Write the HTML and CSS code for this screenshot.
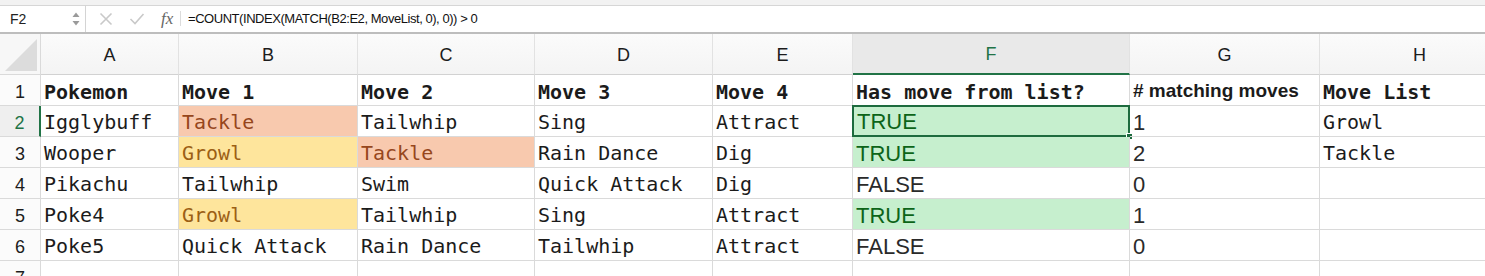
FILE: index.html
```html
<!DOCTYPE html>
<html lang="en">

<head>
    <meta charset="UTF-8">
    <title>Pokemon moves</title>
    <link rel="stylesheet" href="styles.css">
</head>

<body>
    <div class="window">
        <!-- formula bar -->
        <div class="formula-bar">
            <div class="name-box">
                <span class="cell-ref">F2</span>
                <span class="stepper">
                    <svg width="8" height="16" viewBox="0 0 8 16">
                        <path d="M0.5 6 L4 1.5 L7.5 6 Z" fill="#9a9a9a" />
                        <path d="M0.5 10 L4 14.5 L7.5 10 Z" fill="#9a9a9a" />
                    </svg>
                </span>
            </div>
            <div class="bar-tools">
                <svg class="tool" width="14" height="14" viewBox="0 0 14 14">
                    <path d="M1.5 1.5 L12.5 12.5 M12.5 1.5 L1.5 12.5" stroke="#c9c9c9" stroke-width="1.6" />
                </svg>
                <svg class="tool" width="16" height="14" viewBox="0 0 16 14">
                    <path d="M1.5 7 L6 11.5 L14.5 2" stroke="#c9c9c9" stroke-width="1.6" fill="none" />
                </svg>
                <span class="fx">fx</span>
            </div>
            <div class="formula">=COUNT(INDEX(MATCH(B2:E2, MoveList, 0), 0)) &gt; 0</div>
        </div>

        <!-- sheet -->
        <div class="sheet">
            <div class="corner"><span class="corner-tri"></span></div>
            <div class="col-head">A</div>
            <div class="col-head">B</div>
            <div class="col-head">C</div>
            <div class="col-head">D</div>
            <div class="col-head">E</div>
            <div class="col-head active">F</div>
            <div class="col-head">G</div>
            <div class="col-head">H</div>

            <div class="row-head">1</div>
            <div class="cell bold">Pokemon</div>
            <div class="cell bold">Move 1</div>
            <div class="cell bold">Move 2</div>
            <div class="cell bold">Move 3</div>
            <div class="cell bold">Move 4</div>
            <div class="cell bold">Has move from list?</div>
            <div class="cell sans-bold"># matching moves</div>
            <div class="cell bold">Move List</div>

            <div class="row-head active">2</div>
            <div class="cell">Igglybuff</div>
            <div class="cell bad">Tackle</div>
            <div class="cell">Tailwhip</div>
            <div class="cell">Sing</div>
            <div class="cell">Attract</div>
            <div class="cell num good selected">TRUE
                <span class="handle"></span>
            </div>
            <div class="cell num">1</div>
            <div class="cell">Growl</div>

            <div class="row-head">3</div>
            <div class="cell">Wooper</div>
            <div class="cell neutral">Growl</div>
            <div class="cell bad">Tackle</div>
            <div class="cell">Rain Dance</div>
            <div class="cell">Dig</div>
            <div class="cell num good">TRUE</div>
            <div class="cell num">2</div>
            <div class="cell">Tackle</div>

            <div class="row-head">4</div>
            <div class="cell">Pikachu</div>
            <div class="cell">Tailwhip</div>
            <div class="cell">Swim</div>
            <div class="cell">Quick Attack</div>
            <div class="cell">Dig</div>
            <div class="cell num">FALSE</div>
            <div class="cell num">0</div>
            <div class="cell"></div>

            <div class="row-head">5</div>
            <div class="cell">Poke4</div>
            <div class="cell neutral">Growl</div>
            <div class="cell">Tailwhip</div>
            <div class="cell">Sing</div>
            <div class="cell">Attract</div>
            <div class="cell num good">TRUE</div>
            <div class="cell num">1</div>
            <div class="cell"></div>

            <div class="row-head">6</div>
            <div class="cell">Poke5</div>
            <div class="cell">Quick Attack</div>
            <div class="cell">Rain Dance</div>
            <div class="cell">Tailwhip</div>
            <div class="cell">Attract</div>
            <div class="cell num">FALSE</div>
            <div class="cell num">0</div>
            <div class="cell"></div>

            <div class="row-head">7</div>
            <div class="cell"></div>
            <div class="cell"></div>
            <div class="cell"></div>
            <div class="cell"></div>
            <div class="cell"></div>
            <div class="cell"></div>
            <div class="cell"></div>
            <div class="cell"></div>
        </div>
    </div>
</body>

</html>
```

FILE: styles.css
```css
:root {
    --grid: #dadada;
    --head-bg: #f7f7f7;
    --excel-green: #217346;
    --text: #1b1b1b;
}

* {
    margin: 0;
    padding: 0;
    box-sizing: border-box;
}

body {
    background: #ffffff;
    overflow: hidden;
    font-family: 'Liberation Sans', Arial, sans-serif;
    color: var(--text);
}

.window {
    width: 1485px;
    height: 276px;
    overflow: hidden;
}

/* formula bar */
.formula-bar {
    height: 34px;
    display: flex;
    align-items: stretch;
    border-top: 5px solid #f2f2f2;
    border-bottom: 2px solid #bdbdbd;
    box-shadow: inset 0 1px 0 #d6d6d6;
    background: #ffffff;
}

.name-box {
    width: 86px;
    display: flex;
    align-items: center;
    justify-content: space-between;
    padding: 0 5px 0 10px;
    border-right: 1px solid #d4d4d4;
}

.cell-ref {
    font-size: 14px;
    color: #222;
}

.stepper {
    display: flex;
    align-items: center;
}

.bar-tools {
    width: 96px;
    display: flex;
    align-items: center;
    gap: 16px;
    padding-left: 13px;
    position: relative;
}

.bar-tools::after {
    content: "";
    position: absolute;
    right: 1px;
    top: 6px;
    bottom: 6px;
    width: 1px;
    background: #dcdcdc;
}

.fx {
    font-family: 'Liberation Serif', 'Times New Roman', serif;
    font-style: italic;
    font-size: 17px;
    color: #666;
}

.formula {
    display: flex;
    align-items: center;
    padding-left: 6px;
    font-size: 13px;
    letter-spacing: -0.45px;
    color: #111;
}

/* sheet grid */
.sheet {
    display: grid;
    grid-template-columns: 41px 138px 179px 177px 178px 140px 277px 190px 200px;
    grid-template-rows: 41px repeat(7, 31px);
}

.corner,
.col-head,
.row-head,
.cell {
    border-right: 1px solid var(--grid);
    border-bottom: 1px solid var(--grid);
}

.corner {
    background: var(--head-bg);
    position: relative;
}

.corner-tri {
    position: absolute;
    right: 3px;
    bottom: 3px;
    width: 0;
    height: 0;
    border-left: 32px solid transparent;
    border-bottom: 32px solid #dcdcdc;
}

.col-head {
    background: linear-gradient(#fbfbfb, #f4f4f4);
    border-right-color: #e2e2e2;
    border-bottom-color: #d2d2d2;
    display: flex;
    align-items: center;
    justify-content: center;
    font-size: 18px;
    color: #1c1c1c;
    padding-top: 2px;
}

.col-head.active {
    background: #e9e9e9;
    color: var(--excel-green);
    border-bottom: 2px solid var(--excel-green);
}

.row-head {
    background: #fbfbfb;
    display: flex;
    align-items: center;
    justify-content: center;
    font-size: 18px;
    color: #1c1c1c;
    padding-top: 4px;
}

.row-head.active {
    background: #efefef;
    color: var(--excel-green);
    border-right: 2px solid var(--excel-green);
}

.cell {
    display: flex;
    align-items: flex-end;
    padding: 0 0 2px 3px;
    font-family: 'DejaVu Sans Mono', Menlo, monospace;
    font-size: 20px;
    white-space: nowrap;
    position: relative;
}

.cell.bold {
    font-weight: bold;
    padding-bottom: 1px;
}

.cell.sans-bold {
    font-family: 'Liberation Sans', Arial, sans-serif;
    font-weight: bold;
    font-size: 19px;
    padding-bottom: 3px;
}

.cell.num {
    font-family: 'Liberation Sans', Arial, sans-serif;
    font-size: 22px;
    color: #2a2a2a;
    padding-bottom: 0;
}

.cell.bad {
    background: #f8c9ae;
    color: #96461c;
}

.cell.neutral {
    background: #fee59c;
    color: #9c5f14;
}

.cell.good {
    background: #c6efce;
    color: #0c6418;
}

.cell.selected {
    border: 2px solid #1d6b3e;
    margin: -1px 0 0 -1px;
    padding-bottom: 0;
}

.handle {
    position: absolute;
    right: -5px;
    bottom: -5px;
    width: 7px;
    height: 7px;
    background: #1d6b3e;
    border: 1px solid #ffffff;
}
```
